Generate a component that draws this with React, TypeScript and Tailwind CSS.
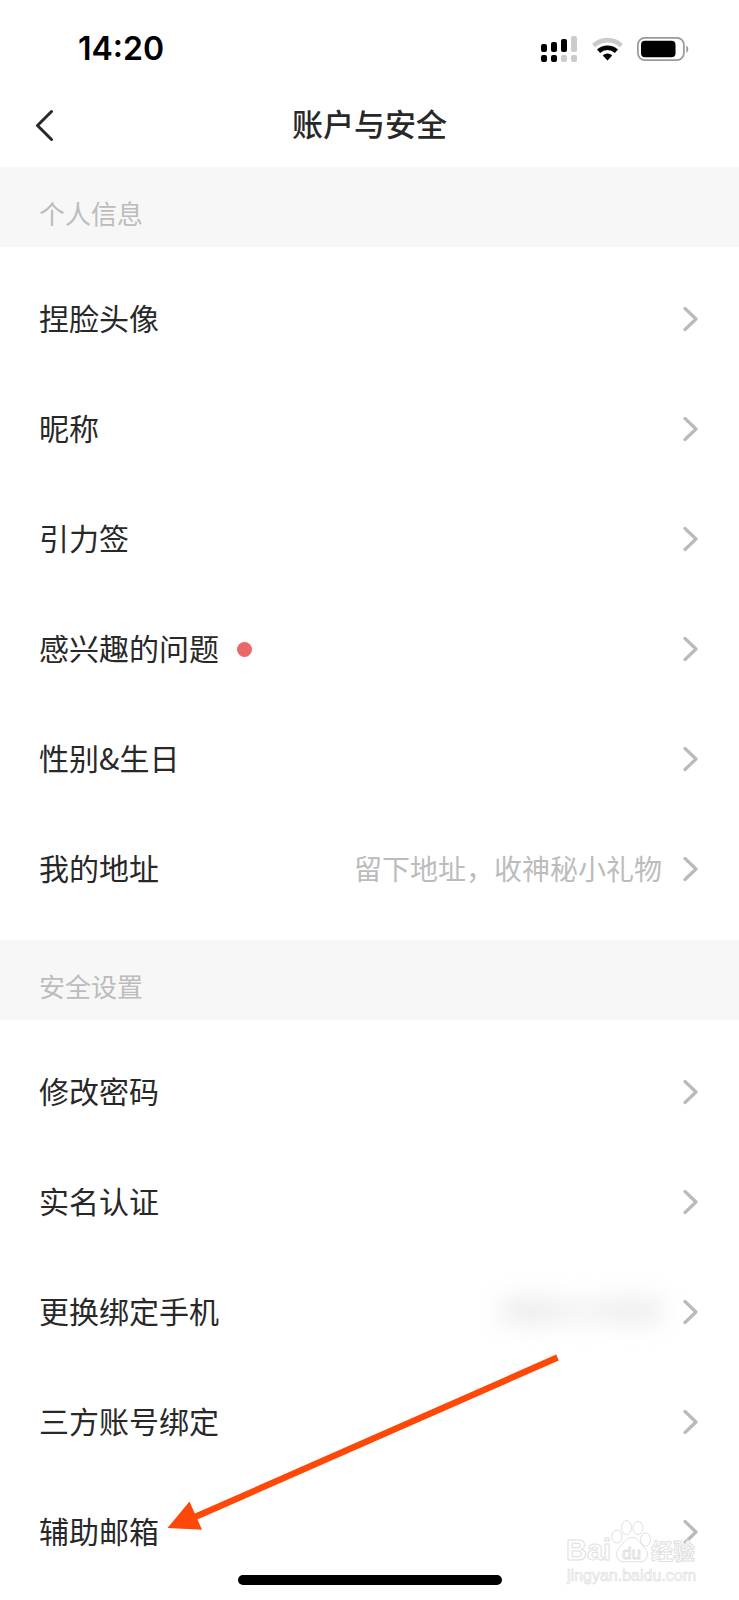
import type { ReactNode } from "react"

type Row = {
  label: string
  dot?: boolean
  detail?: ReactNode
}

const profileRows: Row[] = [
  { label: "捏脸头像" },
  { label: "昵称" },
  { label: "引力签" },
  { label: "感兴趣的问题", dot: true },
  { label: "性别&生日" },
  { label: "我的地址", detail: "留下地址，收神秘小礼物" },
]

const securityRows: Row[] = [
  { label: "修改密码" },
  { label: "实名认证" },
  { label: "更换绑定手机", detail: <HiddenPhone /> },
  { label: "三方账号绑定" },
  { label: "辅助邮箱" },
]

function HiddenPhone() {
  return (
    <span className="flex items-center blur-md" aria-hidden="true">
      <span className="w-14 h-6 bg-[#ebebeb]" />
      <span className="w-12 h-5 bg-[#f0f0f0]" />
      <span className="w-14 h-6 bg-[#ececec]" />
    </span>
  )
}

function StatusBar() {
  return (
    <div className="flex items-center justify-between h-[98px] pl-[78px] pr-[50px]">
      <span className="font-[Inter,sans-serif] text-[32px] font-semibold text-black">14:20</span>
      <div className="flex items-center gap-[14px]">
        <svg width="37" height="26" viewBox="0 0 37 26" aria-hidden="true">
          <g fill="#000">
            <rect x="0" y="8" width="6" height="8" rx="2" />
            <rect x="10" y="6" width="6" height="10" rx="2" />
            <rect x="20" y="3" width="6" height="13" rx="2" />
            <rect x="0" y="19" width="6" height="7" rx="2" />
            <rect x="10" y="19" width="6" height="7" rx="2" />
          </g>
          <g fill="#cbcbcb">
            <rect x="30" y="0" width="6" height="16" rx="2" />
            <rect x="20" y="19" width="6" height="7" rx="2" />
            <rect x="30" y="19" width="6" height="7" rx="2" />
          </g>
        </svg>
        <svg width="31" height="24" viewBox="0 0 31 24" aria-hidden="true">
          <path d="M1.600 8.600a20.500 20.500 0 0 1 27.800 0" fill="none" stroke="#cbcbcb" strokeWidth="4.600" />
          <path d="M6.600 14.200a13 13 0 0 1 17.800 0" fill="none" stroke="#000" strokeWidth="4.600" />
          <path d="M10.800 18.400a7 7 0 0 1 9.400 0L15.500 23.600z" fill="#000" />
        </svg>
        <svg width="52" height="24" viewBox="0 0 52 24" aria-hidden="true">
          <rect x="0.900" y="0.900" width="46" height="22.200" rx="7" fill="none" stroke="#999" strokeWidth="1.700" />
          <rect x="4" y="3.800" width="34.500" height="16.500" rx="4" fill="#000" />
          <path d="M49.300 8.600c2.600 1 2.600 6.200 0 7.200z" fill="#999" />
        </svg>
      </div>
    </div>
  )
}

function ListRow({ label, dot, detail }: Row) {
  return (
    <li>
      <a href="#" className="flex items-center h-[110px] pl-[39px] pr-10">
        <span className="pb-1 text-[30px] text-[#282828]">{label}</span>
        {dot && <span className="ml-[18px] size-[15px] rounded-full bg-[#ea6868]" />}
        <span className="ml-auto mr-[21px] pb-0.5 text-[28px] text-[#bcbcbc]">{detail}</span>
        <svg width="16" height="26" viewBox="0 0 16 26" fill="none" aria-hidden="true">
          <path d="M2 2.500 13 13 2 23.500" stroke="#bababa" strokeWidth="3.200" strokeLinecap="round" strokeLinejoin="round" />
        </svg>
      </a>
    </li>
  )
}

function Section({ title, rows }: { title: string; rows: Row[] }) {
  return (
    <section className="group">
      <h2 className="flex items-center h-20 px-[39px] pt-2.5 bg-[#f7f7f7] text-[26px] text-[#bcbcbc]">
        {title}
      </h2>
      <ul className="pt-[17px] pb-4 group-last:pb-3">
        {rows.map((row) => (
          <ListRow key={row.label} {...row} />
        ))}
      </ul>
    </section>
  )
}

function Arrow() {
  return (
    <svg className="absolute left-[167px] bottom-[68px]" width="392" height="178" viewBox="0 0 392 178" aria-hidden="true">
      <path d="M390.500 3.500 28 163" stroke="#fd4808" strokeWidth="6.400" />
      <path d="M0.500 174 22.500 147.500 35 175.800z" fill="#fd4808" />
    </svg>
  )
}

function Watermark() {
  return (
    <svg className="absolute right-10 bottom-2.5" width="134" height="72" viewBox="0 0 134 72" fill="#fff" fillOpacity="0.75" stroke="#e0e0e0">
      <text x="1" y="42" fontSize="29" fontWeight="700" fontFamily="Liberation Sans, sans-serif">Bai</text>
      <text x="86" y="41" fontSize="22" fontWeight="700" fontFamily="Noto Sans CJK SC, sans-serif">经验</text>
      <text x="2" y="63" fontSize="16" strokeWidth="0.700" fontFamily="Liberation Sans, sans-serif">jingyan.baidu.com</text>
      <ellipse cx="52" cy="18.500" rx="5" ry="6.500" />
      <ellipse cx="61.500" cy="9.500" rx="5" ry="7" />
      <ellipse cx="73" cy="10" rx="5" ry="6.500" />
      <ellipse cx="80.500" cy="21.500" rx="5" ry="6.500" />
      <path d="M67 19.500c5 0 8 5 11 8.500 3 3.500 5.500 7 4 11-1.500 5-6.500 5.500-15 4.500-8 1-13.500.5-15-4.500-1.200-4 .5-7.500 4-11 3-4 6-8.500 11-8.500z" />
      <text x="57" y="41" fontSize="17" fontFamily="Liberation Sans, sans-serif">du</text>
    </svg>
  )
}

export default function App() {
  return (
    <div className="relative min-h-screen overflow-hidden bg-white font-['Noto_Sans_CJK_SC',sans-serif]">
      <StatusBar />
      <header className="grid grid-cols-[1fr_auto_1fr] items-center h-[69px] px-[34px] pb-4">
        <button type="button" aria-label="返回" className="justify-self-start">
          <svg width="22" height="32" viewBox="0 0 22 32" fill="none">
            <path d="M17.500 2.500 3.500 16.500 17.500 30.500" stroke="#282828" strokeWidth="3" strokeLinecap="round" strokeLinejoin="round" />
          </svg>
        </button>
        <h1 className="pb-0.5 text-[31px] font-medium text-[#282828]">账户与安全</h1>
      </header>
      <main>
        <Section title="个人信息" rows={profileRows} />
        <Section title="安全设置" rows={securityRows} />
      </main>
      <Arrow />
      <Watermark />
      <div className="absolute bottom-[15px] left-1/2 h-2.5 w-[264px] -translate-x-1/2 rounded-full bg-black" />
    </div>
  )
}
